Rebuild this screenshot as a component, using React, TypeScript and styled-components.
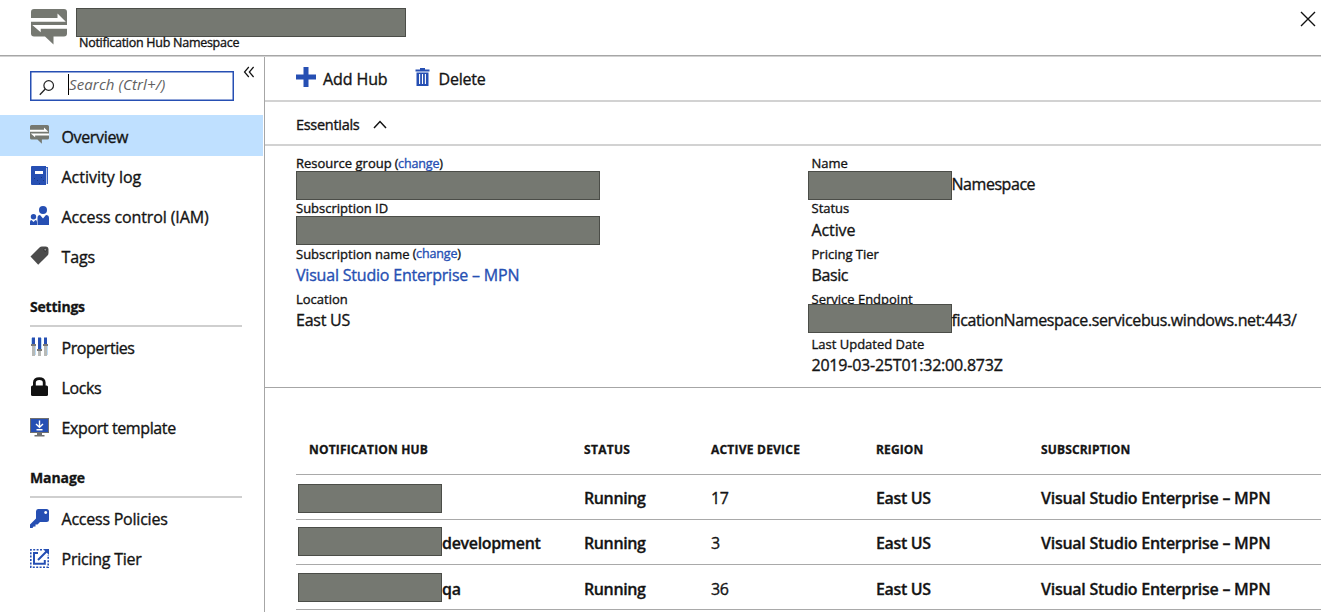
import React from "react";
import styled, { createGlobalStyle } from "styled-components";

const blue = "#264fb3";
const ink = "#141414";
const gray = "#757871";

const GlobalStyle = createGlobalStyle`
  * { box-sizing: border-box; }
  body {
    margin: 0;
    background: #fff;
    color: ${ink};
    font-family: "Open Sans", "Noto Sans", sans-serif;
    overflow: hidden;
  }
`;

const Page = styled.div`
  display: flex;
  flex-direction: column;
  width: 1321px;
  height: 612px;
  overflow: hidden;
`;

const Text = styled.span<{ $size?: number; $ls?: number; $weight?: number; $color?: string }>`
  font-size: ${(p) => p.$size ?? 16}px;
  letter-spacing: ${(p) => p.$ls ?? 0}px;
  font-weight: ${(p) => p.$weight ?? 400};
  color: ${(p) => p.$color ?? "inherit"};
  -webkit-text-stroke: ${(p) => ((p.$weight ?? 400) > 400 ? 0.3 : 0.35)}px;
  white-space: nowrap;
`;

const Redacted = styled.div<{ $w: number; $dx?: number; $dy?: number }>`
  flex: none;
  width: ${(p) => p.$w}px;
  height: 29px;
  margin-left: ${(p) => p.$dx ?? 0}px;
  margin-top: ${(p) => p.$dy ?? 0}px;
  background: ${gray};
  border: 1px solid #4b4d48;
`;

const Header = styled.header`
  display: flex;
  flex: none;
  height: 57px;
  padding: 8px 5px 0 31px;
  border-bottom: 1px solid #d2d2d2;
  box-shadow: inset 0 -1px 0 #a6a6a6;
`;

const HeaderIcon = styled.div`
  width: 45px;
  padding-top: 1px;
`;

const Titles = styled.div`
  display: flex;
  flex-direction: column;
  flex: 1;
`;

const Subtitle = styled.div`
  display: flex;
  align-items: center;
  height: 10px;
  padding-left: 3px;
`;

const CloseButton = styled.button`
  align-self: flex-start;
  width: 16px;
  height: 16px;
  margin: 3px 0 0;
  padding: 0;
  border: 0;
  background: none;
  svg { display: block; }
`;

const Body = styled.div`
  display: flex;
  flex: 1;
  min-height: 0;
`;

const Sidebar = styled.nav`
  width: 265px;
  flex: none;
  border-right: 1px solid #a6a6a6;
`;

const SearchRow = styled.div`
  display: flex;
  height: 58px;
  padding: 14px 0 0 30px;
`;

const SearchBox = styled.div`
  display: flex;
  align-items: center;
  width: 204px;
  height: 30px;
  padding-left: 8px;
  border: 1.5px solid ${blue};
  box-shadow: inset 0 0 0 0.5px ${blue};
  svg { margin-top: 3px; }
`;

const Caret = styled.span`
  width: 1px;
  height: 21px;
  margin: -4px 0 0 13px;
  background: #000;
`;

const Placeholder = styled(Text)`
  padding-bottom: 4px;
  font-style: italic;
  color: #616161;
  -webkit-text-stroke: 0;
`;

const Collapse = styled.div`
  margin: -5px 0 0 9px;
  svg { display: block; }
`;

const NavItem = styled.a<{ $active?: boolean; $raised?: boolean }>`
  display: flex;
  align-items: center;
  height: ${(p) => (p.$active ? 41 : 40.2)}px;
  width: 263px;
  padding-left: 30px;
  background: ${(p) => (p.$active ? "#bfe0ff" : "transparent")};
  svg { flex: none; margin: -2px 12.5px 0 0; }
  span { padding-top: ${(p) => (p.$raised ? 0 : 2)}px; }
`;

const SectionTitle = styled.div`
  display: flex;
  align-items: flex-end;
  width: 212px;
  height: 50px;
  margin: 0 0 1px 30px;
  padding-bottom: 9px;
  border-bottom: 2px solid #cfcfcf;
`;

const Main = styled.main`
  flex: 1;
  min-width: 0;
`;

const Toolbar = styled.div`
  display: flex;
  align-items: center;
  height: 45px;
  padding-left: 31px;
  border-bottom: 2px solid #d2d2d2;
`;

const Command = styled.div<{ $gap: number }>`
  display: flex;
  align-items: center;
  gap: ${(p) => p.$gap}px;
  margin-right: 27px;
  svg { margin-top: -3px; }
  span { padding-top: 1px; }
`;

const EssentialsBar = styled.div`
  display: flex;
  align-items: center;
  gap: 14px;
  height: 44px;
  padding: 3px 0 0 31px;
  border-bottom: 2px solid #d2d2d2;
`;

const Essentials = styled.div`
  display: grid;
  grid-template-columns: 515.5px 1fr;
  height: 242px;
  padding: 6px 0 0 31px;
  border-bottom: 1px solid #a6a6a6;
`;

const Field = styled.div`
  height: 45.25px;
`;

const FieldLabel = styled.div`
  display: flex;
  align-items: center;
  height: 20px;
  padding-top: 2px;
`;

const FieldValue = styled.div`
  display: flex;
  align-items: center;
  height: 26px;
  span { padding-bottom: 1.5px; }
`;

const Table = styled.div`
  margin-left: 31px;
  padding-top: 37px;
`;

const Row = styled.div<{ $head?: boolean }>`
  display: grid;
  grid-template-columns: 288px 127px 165px 165px 1fr;
  align-items: center;
  height: ${(p) => (p.$head ? 49.7 : 45.25)}px;
  border-bottom: 1.5px solid #a9a9a9;
  span { padding-top: ${(p) => (p.$head ? 0 : 2.4)}px; }
`;

const Cell = styled.div<{ $indent?: number }>`
  display: flex;
  align-items: center;
  height: 30px;
  padding-left: ${(p) => p.$indent ?? 0}px;
`;

const HubIcon = ({ size }: { size: number }) => (
  <svg width={size} height={size} viewBox="0 0 36 36">
    <path fill={gray} d="M3 0H33Q36 0 36 3V24.500Q36 27.500 33 27.500H22.500V35.500L14 27.500H3Q0 27.500 0 24.500V3Q0 0 3 0Z" />
    <path fill="#fff" d="M0 9H26.500V4.600L34.800 12.700H0ZM36 16H1.300L9.700 23.300V19.800H36Z" />
  </svg>
);

const ActivityIcon = () => (
  <svg width="19" height="19" viewBox="0 0 19 19">
    <path fill="#3c63bd" d="M14 1H18V18H14Z" />
    <path fill={blue} d="M2 0H16V19H2Q1 19 1 18V1Q1 0 2 0Z" />
    <path fill="#fff" d="M5 5H13V8H5Z" />
    <path fill="#dbe6fa" d="M16 2H16.800V18H16Z" />
    <path fill="#17357f" d="M4 12h1v1H4zM7 14h1v1H7zM11 11h1v1h-1zM13 14h1v1h-1zM9 17h1v1H9z" />
  </svg>
);

const AccessIcon = () => (
  <svg width="19" height="19" viewBox="0 0 19 19">
    <circle cx="13" cy="4" r="4" fill={blue} />
    <path fill={blue} d="M7.500 19V12Q7.500 9 10 9L13 12.500L16 9Q19 9 19 12V19Z" />
    <circle cx="3.500" cy="10.800" r="2.700" fill={blue} />
    <path fill={blue} d="M0 19V16Q0 14 1.500 14L3.500 16L5.500 14Q7 14 7 16V19Z" />
  </svg>
);

const TagIcon = () => (
  <svg width="19" height="19" viewBox="0 0 19 19">
    <path fill="#4c4c4c" d="M0.500 10.500L9.500 1.500Q10.500 0.500 12 0.500H15.500Q18.500 0.500 18.500 3.500V7Q18.500 8.500 17.500 9.500L8.200 18.700Z" />
    <circle cx="15.300" cy="3.700" r="1.400" fill="#8d8d8d" stroke="#222" strokeWidth="0.700" />
  </svg>
);

const PropertiesIcon = () => (
  <svg width="19" height="20" viewBox="0 0 19 20">
    <path fill="#b8bab7" d="M2 9H5V19H2ZM8 14H11V19H8ZM14 9H17V19H14Z" />
    <path fill={blue} d="M2 0.500H5V7H2ZM8 0.500H11V12H8ZM14 0.500H17V7H14Z" />
    <path fill="#777" d="M1 7H6V9H1ZM7 12H12V14H7ZM13 7H18V9H13Z" />
    <path fill="#bcdcf7" d="M1 1H2V7H1ZM5 9H6V18H5ZM11 1H12V12H11ZM17 9H18V18H17Z" />
  </svg>
);

const LockIcon = () => (
  <svg width="19" height="19" viewBox="0 0 19 19">
    <path fill="none" stroke="#111" strokeWidth="2.800" d="M4.400 9V5.500Q4.400 1.600 9.300 1.600T14.200 5.500V9" />
    <rect x="1" y="8.500" width="17" height="10.500" rx="1.500" fill="#111" />
  </svg>
);

const ExportIcon = () => (
  <svg width="19" height="19" viewBox="0 0 19 19">
    <path fill="#707070" d="M0 0H19V15H0ZM7 15H12V17H14.500V18.500H4.500V17H7Z" />
    <path fill={blue} d="M1 1H18V14H1Z" />
    <path fill="none" stroke="#fff" strokeWidth="1.400" d="M9.500 2.500V9M6 6L9.500 9.300L13 6M6.500 11.700H12.500" />
  </svg>
);

const KeyIcon = () => (
  <svg width="19" height="19" viewBox="0 0 19 19">
    <path fill={blue} fillRule="evenodd" d="M8 0H16.500Q19 0 19 2.500V10.500Q19 13 16.500 13H10L7.500 15.500H5.500V17.500H3.500L2.500 19H0V15.500L6 9.500V2.500Q6 0 8 0ZM15.700 2a1.500 1.500 0 1 0 .01 0Z" />
  </svg>
);

const PricingIcon = () => (
  <svg width="19" height="19" viewBox="0 0 19 19">
    <path fill="none" stroke={blue} strokeWidth="1.600" strokeDasharray="2 1.400" d="M12 0.800H0.800V18.200H18.200V6" />
    <path fill="none" stroke={blue} strokeWidth="2" d="M8 4H4V14.800H14.800V11M8 11L17 2" />
    <path fill={blue} d="M13 0H19V6Z" />
  </svg>
);

const settings = [
  { label: "Properties", icon: <PropertiesIcon />, ls: -0.45 },
  { label: "Locks", icon: <LockIcon />, ls: -0.4 },
  { label: "Export template", icon: <ExportIcon />, ls: -0.38 },
];

const hubs = [
  { suffix: "", devices: "17", dy: 4 },
  { suffix: "development", devices: "3", dy: -2 },
  { suffix: "qa", devices: "36", dy: 1 },
];

interface NavProps {
  label: string;
  icon: React.ReactNode;
  active?: boolean;
  raised?: boolean;
  ls?: number;
}

const Nav = ({ label, icon, active, raised, ls = -0.23 }: NavProps) => (
  <NavItem $active={active} $raised={raised}>
    {icon}
    <Text $ls={ls}>{label}</Text>
  </NavItem>
);

const Label = ({ children, change }: { children: string; change?: boolean }) => (
  <FieldLabel>
    <Text $size={13}>{children}</Text>
    {change && (
      <Text $size={12.5} $ls={-0.25}>
        &nbsp;(<Text $size={12.5} $ls={-0.15} $color={blue}>change</Text>)
      </Text>
    )}
  </FieldLabel>
);

export default function App() {
  return (
    <Page>
      <GlobalStyle />
      <Header>
        <HeaderIcon><HubIcon size={36} /></HeaderIcon>
        <Titles>
          <Redacted $w={330} />
          <Subtitle><Text $size={12.5} $ls={-0.27}>Notification Hub Namespace</Text></Subtitle>
        </Titles>
        <CloseButton aria-label="Close">
          <svg width="16" height="16" viewBox="0 0 16 16"><path d="M1 1L15 15M15 1L1 15" stroke="#111" strokeWidth="1.400" /></svg>
        </CloseButton>
      </Header>
      <Body>
        <Sidebar>
          <SearchRow>
            <SearchBox>
              <svg width="16" height="17" viewBox="0 0 16 17">
                <circle cx="9.700" cy="6.500" r="4.800" fill="none" stroke="#222" strokeWidth="1.200" />
                <path d="M6.300 10L0.800 15.800" stroke="#222" strokeWidth="1.300" />
              </svg>
              <Caret />
              <Placeholder $size={15} $ls={0.12}>Search (Ctrl+/)</Placeholder>
            </SearchBox>
            <Collapse>
              <svg width="12" height="12" viewBox="0 0 12 12"><path d="M5.800 1L1.500 6L5.800 11M10.600 1L6.300 6L10.600 11" fill="none" stroke="#111" strokeWidth="1.200" /></svg>
            </Collapse>
          </SearchRow>
          <Nav active label="Overview" icon={<HubIcon size={19} />} ls={-0.35} />
          <Nav label="Activity log" icon={<ActivityIcon />} ls={0} />
          <Nav label="Access control (IAM)" icon={<AccessIcon />} ls={-0.12} />
          <Nav label="Tags" icon={<TagIcon />} ls={-0.1} />
          <SectionTitle><Text $size={14} $weight={700} $ls={-0.2}>Settings</Text></SectionTitle>
          {settings.map((s) => <Nav key={s.label} raised {...s} />)}
          <SectionTitle><Text $size={14} $weight={700} $ls={-0.1}>Manage</Text></SectionTitle>
          <Nav raised label="Access Policies" icon={<KeyIcon />} />
          <Nav raised label="Pricing Tier" icon={<PricingIcon />} />
        </Sidebar>
        <Main>
          <Toolbar>
            <Command $gap={7}>
              <svg width="20" height="20" viewBox="0 0 20 20"><path fill={blue} d="M7.500 0H12.500V7.500H20V12.500H12.500V20H7.500V12.500H0V7.500H7.500Z" /></svg>
              <Text $ls={-0.1}>Add Hub</Text>
            </Command>
            <Command $gap={9}>
              <svg width="15" height="18" viewBox="0 0 15 18">
                <path fill={blue} d="M5 0H10V1.500H14.500V3.500H0.500V1.500H5ZM1.500 4.500H13.500V18H1.500Z" />
                <path stroke="#fff" strokeWidth="1.100" d="M4.600 6V16M7.500 6V16M10.400 6V16" />
              </svg>
              <Text $ls={-0.25}>Delete</Text>
            </Command>
          </Toolbar>
          <EssentialsBar>
            <Text $size={14.5} $ls={-0.3}>Essentials</Text>
            <svg width="14" height="9" viewBox="0 0 14 9"><path d="M1 8L7 1.500L13 8" fill="none" stroke="#111" strokeWidth="1.500" /></svg>
          </EssentialsBar>
          <Essentials>
            <div>
              <Field><Label change>Resource group</Label><FieldValue><Redacted $w={304} /></FieldValue></Field>
              <Field><Label>Subscription ID</Label><FieldValue><Redacted $w={304} /></FieldValue></Field>
              <Field><Label change>Subscription name</Label><FieldValue><Text $ls={-0.2} $color={blue}>Visual Studio Enterprise – MPN</Text></FieldValue></Field>
              <Field><Label>Location</Label><FieldValue><Text $ls={-0.25}>East US</Text></FieldValue></Field>
            </div>
            <div>
              <Field><Label>Name</Label><FieldValue><Redacted $w={144} $dx={-4} /><Text $ls={-0.45}>Namespace</Text></FieldValue></Field>
              <Field><Label>Status</Label><FieldValue><Text $ls={-0.1}>Active</Text></FieldValue></Field>
              <Field><Label>Pricing Tier</Label><FieldValue><Text $ls={-0.4}>Basic</Text></FieldValue></Field>
              <Field><Label>Service Endpoint</Label><FieldValue><Redacted $w={144} $dx={-4} $dy={-4} /><Text $ls={-0.38}>ficationNamespace.servicebus.windows.net:443/</Text></FieldValue></Field>
              <Field><Label>Last Updated Date</Label><FieldValue><Text $ls={-0.22}>2019-03-25T01:32:00.873Z</Text></FieldValue></Field>
            </div>
          </Essentials>
          <Table>
            <Row $head>
              <Cell $indent={13}><Text $size={12} $weight={700} $ls={0.17}>NOTIFICATION HUB</Text></Cell>
              <Cell><Text $size={12} $weight={700} $ls={0.3}>STATUS</Text></Cell>
              <Cell><Text $size={12} $weight={700} $ls={0.22}>ACTIVE DEVICE</Text></Cell>
              <Cell><Text $size={12} $weight={700} $ls={0.12}>REGION</Text></Cell>
              <Cell><Text $size={12} $weight={700} $ls={0.15}>SUBSCRIPTION</Text></Cell>
            </Row>
            {hubs.map((h) => (
              <Row key={h.devices}>
                <Cell $indent={2}><Redacted $w={144} $dy={h.dy} /><Text $weight={600} $ls={-0.33}>{h.suffix}</Text></Cell>
                <Cell><Text $weight={600} $ls={-0.38}>Running</Text></Cell>
                <Cell><Text $ls={-0.3}>{h.devices}</Text></Cell>
                <Cell><Text $weight={600} $ls={-0.35}>East US</Text></Cell>
                <Cell><Text $weight={600} $ls={-0.26}>Visual Studio Enterprise – MPN</Text></Cell>
              </Row>
            ))}
          </Table>
        </Main>
      </Body>
    </Page>
  );
}
